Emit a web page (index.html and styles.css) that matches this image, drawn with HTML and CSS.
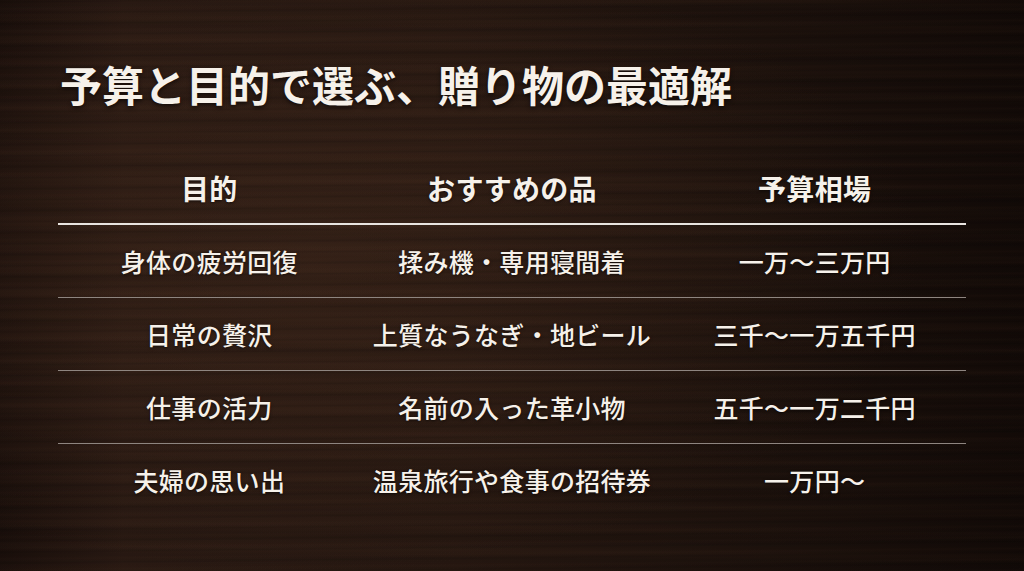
FILE: index.html
```html
<!DOCTYPE html>
<html lang="ja">
<head>
<meta charset="utf-8">
<title>予算と目的で選ぶ、贈り物の最適解</title>
<link rel="stylesheet" href="styles.css">
</head>
<body>
<main class="slide">
  <h1 class="title">予算と目的で選ぶ、贈り物の最適解</h1>
  <section class="table">
    <div class="row head">
      <div class="cell">目的</div>
      <div class="cell">おすすめの品</div>
      <div class="cell">予算相場</div>
    </div>
    <div class="row">
      <div class="cell">身体の疲労回復</div>
      <div class="cell">揉み機・専用寝間着</div>
      <div class="cell">一万〜三万円</div>
    </div>
    <div class="row">
      <div class="cell">日常の贅沢</div>
      <div class="cell">上質なうなぎ・地ビール</div>
      <div class="cell">三千〜一万五千円</div>
    </div>
    <div class="row">
      <div class="cell">仕事の活力</div>
      <div class="cell">名前の入った革小物</div>
      <div class="cell">五千〜一万二千円</div>
    </div>
    <div class="row last">
      <div class="cell">夫婦の思い出</div>
      <div class="cell">温泉旅行や食事の招待券</div>
      <div class="cell">一万円〜</div>
    </div>
  </section>
</main>
</body>
</html>
```
FILE: styles.css
```css
html, body {
  margin: 0;
  padding: 0;
  width: 1024px;
  height: 571px;
  overflow: hidden;
}
body {
  font-family: "Noto Sans CJK JP", "Noto Sans", sans-serif;
  color: #f6f1ea;
  background-color: #1e120d;
  background-image:
    repeating-linear-gradient(179.4deg, rgba(0,0,0,0) 0px, rgba(0,0,0,0.10) 2px, rgba(0,0,0,0) 4px, rgba(0,0,0,0) 7px, rgba(80,50,35,0.06) 9px, rgba(0,0,0,0) 11px),
    repeating-linear-gradient(180.7deg, rgba(0,0,0,0) 0px, rgba(90,60,40,0.05) 5px, rgba(0,0,0,0.08) 13px, rgba(0,0,0,0) 23px),
    repeating-linear-gradient(179.8deg, rgba(0,0,0,0) 0px, rgba(0,0,0,0.06) 19px, rgba(0,0,0,0) 37px),
    radial-gradient(ellipse 60% 55% at 30% 45%, rgba(70,44,30,0.5), rgba(0,0,0,0) 100%),
    linear-gradient(90deg, #1a0f0b 0%, #2a1a13 12%, #271811 45%, #1c110c 75%, #120a07 100%);
}
.slide {
  box-sizing: border-box;
  width: 1024px;
  height: 571px;
  padding: 60px 58px 0 58px;
}
.title {
  margin: 0 0 44px 2px;
  font-size: 42px;
  line-height: 48px;
  font-weight: 700;
  letter-spacing: 0;
  text-shadow: 0 2px 4px rgba(0,0,0,0.6);
}
.table {
  width: 908px;
}
.row {
  display: grid;
  grid-template-columns: 1fr 1fr 1fr;
  height: 72px;
  align-items: center;
  border-bottom: 1px solid #8e8580;
}
.row.head {
  height: 71px;
  border-bottom: 2px solid #e8e4e0;
}
.row.last {
  border-bottom: none;
}
.cell {
  text-align: center;
  font-size: 25px;
  font-weight: 500;
  letter-spacing: 0.3px;
  text-shadow: 0 1px 3px rgba(0,0,0,0.6);
}
.head .cell {
  font-size: 28px;
  font-weight: 700;
}
```
